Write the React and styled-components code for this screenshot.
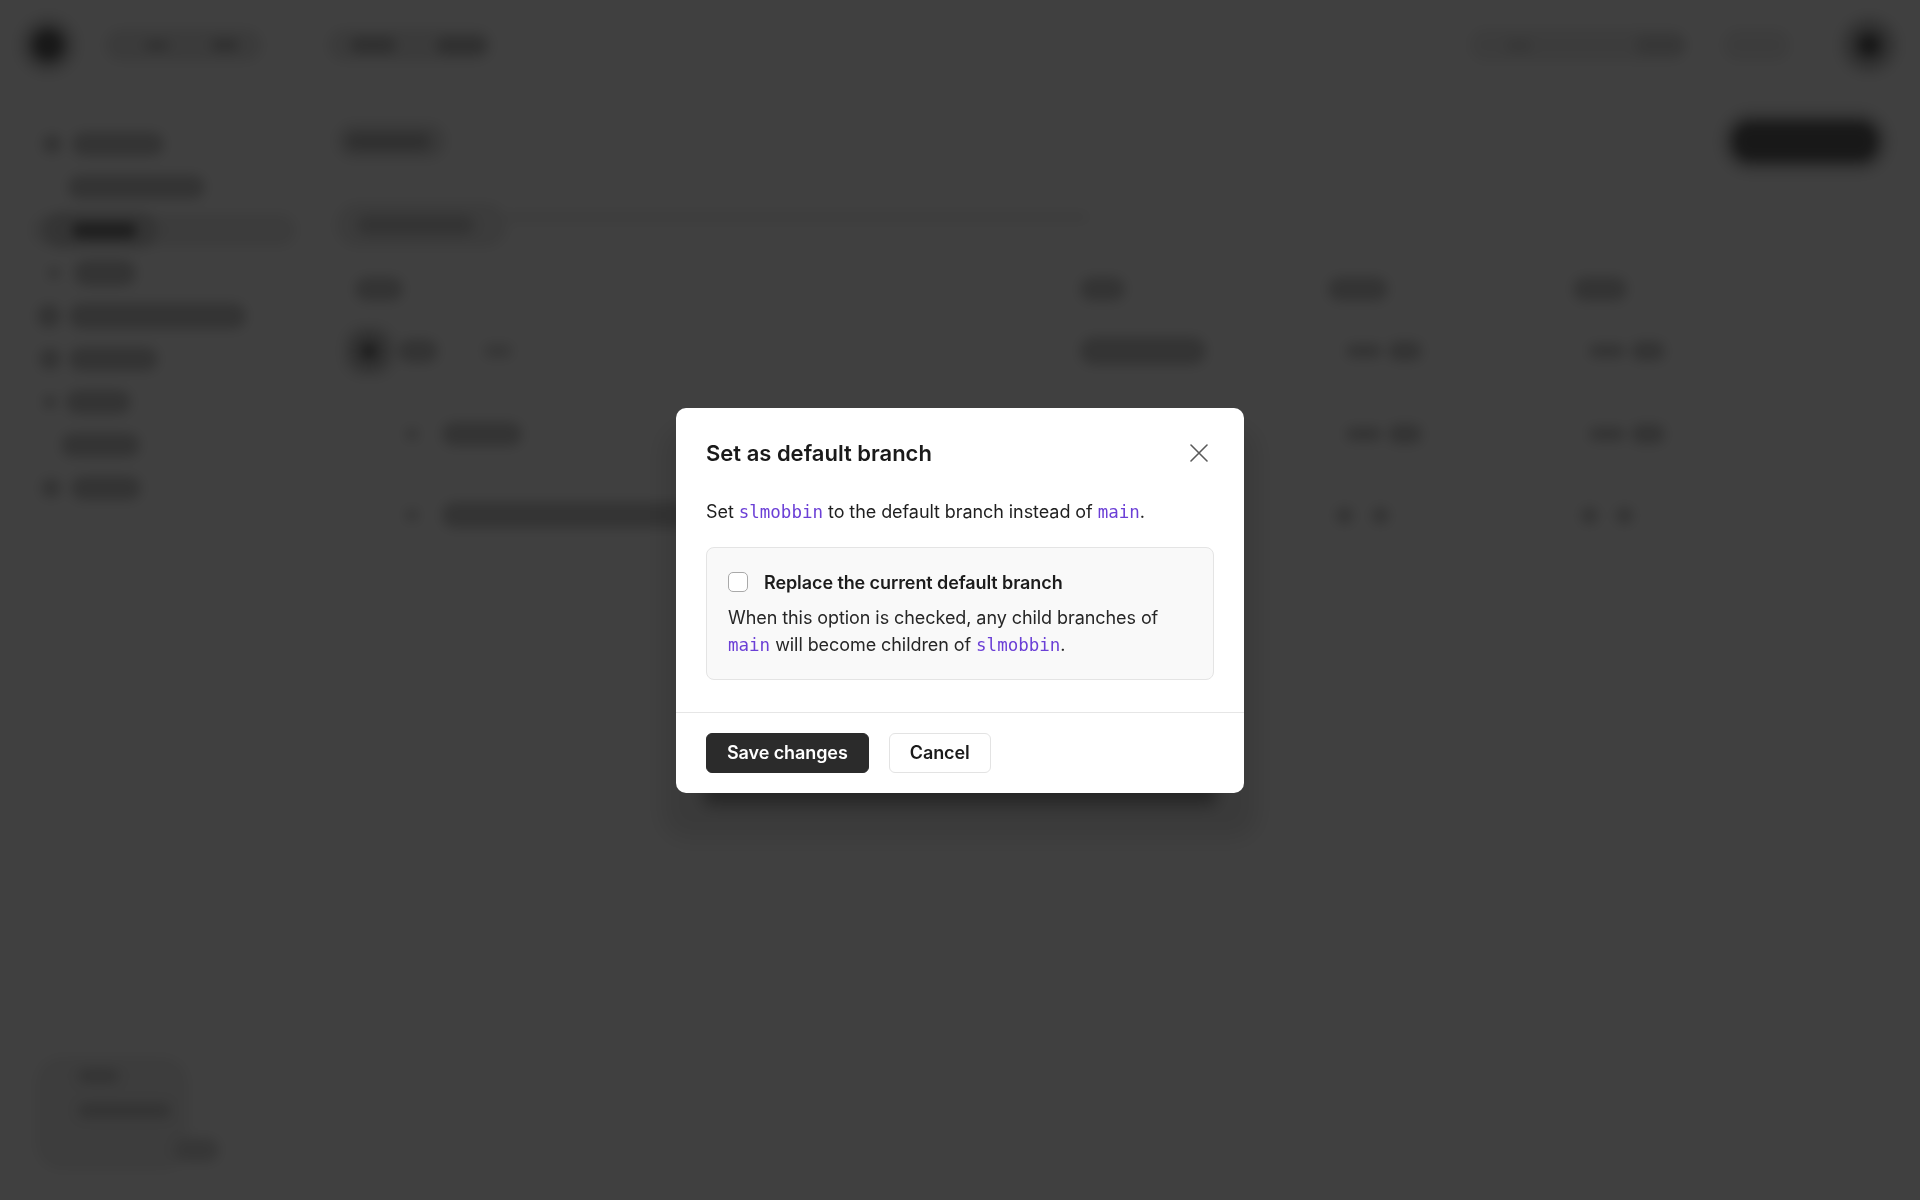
import React from "react";
import styled, { createGlobalStyle } from "styled-components";

const GlobalStyle = createGlobalStyle`
  html, body {
    margin: 0;
    padding: 0;
    background: #ffffff;
  }
  body {
    font-family: Inter, "Noto Sans", "Liberation Sans", sans-serif;
    -webkit-font-smoothing: antialiased;
  }
  * {
    box-sizing: border-box;
  }
`;

/* ---------- the page behind the dialog (blurred) ---------- */

const Page = styled.div`
  min-height: 100vh;
  display: flex;
  flex-direction: column;
  background: #ffffff;
  filter: blur(6px);
`;

const TopBar = styled.header`
  height: 90px;
  display: flex;
  align-items: center;
  justify-content: space-between;
  padding: 0 39px 0 33px;
`;

const NavGroup = styled.div`
  display: flex;
  align-items: center;
  gap: ${(p) => p.$gap || 20}px;
`;

const Avatar = styled.span`
  display: block;
  flex: none;
  width: ${(p) => p.$size || 28}px;
  height: ${(p) => p.$size || 28}px;
  margin-left: ${(p) => p.$ml || 0}px;
  border-radius: 50%;
  background: #626262;
  box-shadow: 0 0 0 ${(p) => p.$ring || 8}px #c0c0c0, 0 0 0 ${(p) => (p.$ring || 8) + 7}px #ebebeb;
`;

const Chip = styled.div`
  display: flex;
  flex: none;
  align-items: center;
  gap: ${(p) => p.$gap || 10}px;
  width: ${(p) => (p.$w ? `${p.$w}px` : "auto")};
  height: ${(p) => p.$h || 32}px;
  margin-left: ${(p) => p.$ml || 0}px;
  padding: 0 ${(p) => p.$pad ?? 12}px;
  justify-content: ${(p) => p.$justify || "flex-start"};
  border-radius: 999px;
  background: ${(p) => p.$bg || "#eaeaea"};
`;

const tones = {
  faint: "#dadada",
  light: "#cdcdcd",
  mid: "#bdbdbd",
  dark: "#767676",
};

const Ghost = styled.span`
  display: block;
  flex: none;
  width: ${(p) => p.$w}px;
  height: ${(p) => p.$h || 14}px;
  margin-left: ${(p) => p.$ml || 0}px;
  border-radius: 999px;
  background: ${(p) => tones[p.$tone || "light"]};
`;

const Dot = styled.span`
  display: block;
  flex: none;
  width: ${(p) => p.$size || 10}px;
  height: ${(p) => p.$size || 10}px;
  border-radius: 50%;
  background: ${(p) => tones[p.$tone || "light"]};
`;

const Layout = styled.div`
  flex: 1;
  display: grid;
  grid-template-columns: 300px 1fr;
`;

const Sidebar = styled.aside`
  display: flex;
  flex-direction: column;
  gap: 11px;
  padding: 38px 0 30px 36px;
`;

const SideItem = styled.div`
  height: 32px;
  display: flex;
  align-items: center;
  gap: ${(p) => p.$gap || 10}px;
  margin-left: ${(p) => (p.$active ? -4 : 0)}px;
  padding-left: ${(p) => p.$indent || 0}px;
  border-radius: 999px;
  background: ${(p) => (p.$active ? "#ededed" : "transparent")};
  width: ${(p) => (p.$active ? "264px" : "auto")};
`;

const SideFooter = styled.div`
  margin-top: auto;
  width: 152px;
  display: flex;
  flex-direction: column;
  gap: 20px;
  padding: 12px 0 8px 42px;
  border-radius: 26px;
  background: #f1f1f1;
`;

const Main = styled.main`
  display: flex;
  flex-direction: column;
  padding: 31px 40px 0 36px;
`;

const MainHeader = styled.div`
  display: flex;
  align-items: center;
  justify-content: space-between;
  height: 40px;
`;

const DarkButton = styled.span`
  display: block;
  width: 144px;
  height: 39px;
  margin-right: 3px;
  border-radius: 18px;
  background: #626262;
  box-shadow: 0 0 0 8px #c2c2c2, 0 0 0 14px #eaeaea;
`;

const Tabs = styled.div`
  display: flex;
  align-items: flex-start;
  height: 44px;
  margin-top: 42px;
`;

const TabLine = styled.span`
  display: block;
  width: 580px;
  height: 6px;
  margin-top: 11px;
  border-radius: 3px;
  background: #e8e8e8;
`;

const Table = styled.div`
  margin-top: 14px;
  display: flex;
  flex-direction: column;
`;

const Row = styled.div`
  display: grid;
  grid-template-columns: 744px 248px 245px 1fr;
  align-items: center;
  height: ${(p) => p.$h || 80}px;
`;

const Cell = styled.div`
  display: flex;
  align-items: center;
  gap: ${(p) => p.$gap || 10}px;
  padding-left: ${(p) => p.$indent || 0}px;
`;

/* ---------- dialog ---------- */

const Overlay = styled.div`
  position: fixed;
  inset: 0;
  display: flex;
  align-items: center;
  justify-content: center;
  background: rgba(0, 0, 0, 0.75);
`;

const Dialog = styled.div`
  width: 568px;
  background: #ffffff;
  border-radius: 10px;
  box-shadow: 0 40px 16px -28px rgba(0, 0, 0, 0.36), 0 32px 24px 14px rgba(0, 0, 0, 0.1);
  color: #1d1d1d;
`;

const DialogHeader = styled.div`
  display: flex;
  align-items: center;
  justify-content: space-between;
  padding: 30px 36px 0 30px;
`;

const Title = styled.h2`
  margin: 0;
  font-size: 22px;
  line-height: 30px;
  font-weight: 600;
  color: #1a1a1a;
`;

const CloseButton = styled.button`
  display: flex;
  align-items: center;
  justify-content: center;
  width: 18px;
  height: 18px;
  padding: 0;
  border: 0;
  background: none;
  cursor: pointer;
`;

const DialogBody = styled.div`
  display: flex;
  flex-direction: column;
  gap: 21px;
  padding: 30px 30px 32px;
`;

const Text = styled.p`
  margin: 0;
  font-size: 18px;
  line-height: 27px;
  letter-spacing: -0.004em;
  color: ${(p) => (p.$muted ? "#262626" : "#1f1f1f")};
`;

const Code = styled.code`
  font-family: "DejaVu Sans Mono", "Liberation Mono", monospace;
  font-size: 17.5px;
  letter-spacing: 0;
  color: #6b3fd6;
`;

const OptionBox = styled.div`
  display: flex;
  flex-direction: column;
  gap: 8px;
  padding: 21px 21px 20px;
  border: 1px solid #e4e4e4;
  border-radius: 8px;
  background: #f9f9f9;
`;

const OptionLabel = styled.label`
  display: flex;
  align-items: center;
  gap: 16px;
  font-size: 18px;
  line-height: 27px;
  font-weight: 600;
  letter-spacing: -0.005em;
  color: #1c1c1c;
  cursor: pointer;
`;

const Checkbox = styled.input.attrs({ type: "checkbox" })`
  appearance: none;
  margin: 0;
  width: 20px;
  height: 20px;
  border: 1.5px solid #a9a9a9;
  border-radius: 5px;
  background: #ffffff;
`;

const DialogFooter = styled.div`
  display: flex;
  align-items: center;
  gap: 20px;
  padding: 20px 30px;
  border-top: 1px solid #e6e6e6;
`;

const Button = styled.button`
  height: 40px;
  padding: 0 20px;
  border-radius: 6px;
  font-family: inherit;
  font-size: 18px;
  font-weight: 600;
  letter-spacing: -0.005em;
  cursor: pointer;
  border: 1px solid ${(p) => (p.$primary ? "#2b2b2b" : "#e3e3e3")};
  background: ${(p) => (p.$primary ? "#2b2b2b" : "#ffffff")};
  color: ${(p) => (p.$primary ? "#ffffff" : "#1a1a1a")};
`;

function CloseIcon() {
  return (
    <svg width="18" height="18" viewBox="0 0 18 18" fill="none">
      <path d="M1 1L17 17M17 1L1 17" stroke="#5a5a5a" strokeWidth="1.6" strokeLinecap="round" />
    </svg>
  );
}

function MetaPair() {
  return (
    <>
      <Ghost $w={36} $h={14} />
      <Ghost $w={34} $h={20} $ml={-4} />
    </>
  );
}

function Backdrop() {
  return (
    <Page aria-hidden="true">
      <TopBar>
        <NavGroup $gap={0}>
          <Avatar $size={30} $ring={9} />
          <Chip $w={157} $ml={22} $pad={0}>
            <Ghost $w={24} $h={9} $tone="mid" $ml={40} />
            <Ghost $w={28} $h={12} $tone="mid" $ml={32} />
          </Chip>
          <Chip $w={164} $ml={46} $pad={0} $gap={0}>
            <Ghost $w={46} $h={16} $tone="mid" $ml={22} />
            <Ghost $w={50} $h={17} $tone="mid" $ml={30} />
          </Chip>
        </NavGroup>
        <NavGroup $gap={0}>
          <Chip $w={217} $bg="#f0f0f0" $pad={0} $gap={0}>
            <Ghost $w={26} $h={11} $tone="faint" $ml={36} />
            <Ghost $w={50} $h={20} $tone="faint" $ml={93} />
          </Chip>
          <Chip $w={67} $ml={16} $bg="#f0f0f0" />
          <Avatar $size={24} $ring={12} $ml={47} />
        </NavGroup>
      </TopBar>

      <Layout>
        <Sidebar>
          <SideItem $indent={6}>
            <Dot $size={20} />
            <Ghost $w={92} $h={24} />
          </SideItem>
          <SideItem $indent={32}>
            <Ghost $w={137} $h={24} />
          </SideItem>
          <SideItem $active $indent={11}>
            <Chip $w={115} $h={36} $bg="#d0d0d0" $pad={29}>
              <Ghost $w={65} $h={15} $tone="dark" />
            </Chip>
          </SideItem>
          <SideItem $indent={12} $gap={14}>
            <Dot $size={12} />
            <Ghost $w={62} $h={26} />
          </SideItem>
          <SideItem $indent={1} $gap={8}>
            <Dot $size={24} />
            <Ghost $w={177} $h={26} />
          </SideItem>
          <SideItem $indent={3} $gap={8}>
            <Dot $size={22} />
            <Ghost $w={89} $h={24} />
          </SideItem>
          <SideItem $indent={7} $gap={9}>
            <Dot $size={14} />
            <Ghost $w={65} $h={24} />
          </SideItem>
          <SideItem $indent={25}>
            <Ghost $w={79} $h={24} />
          </SideItem>
          <SideItem $indent={5} $gap={10}>
            <Dot $size={20} />
            <Ghost $w={70} $h={24} />
          </SideItem>
          <SideFooter>
            <Ghost $w={41} $h={14} />
            <Ghost $w={93} $h={15} />
            <Ghost $w={45} $h={24} $ml={96} $tone="faint" />
          </SideFooter>
        </Sidebar>

        <Main>
          <MainHeader>
            <Chip $w={110} $h={36} $bg="#e6e6e6" $pad={10}>
              <Ghost $w={85} $h={17} $tone="mid" />
            </Chip>
            <DarkButton />
          </MainHeader>
          <Tabs>
            <Chip $w={171} $h={44} $bg="#ededed" $pad={21}>
              <Ghost $w={117} $h={20} />
            </Chip>
            <TabLine />
          </Tabs>
          <Table>
            <Row $h={56}>
              <Cell $indent={19}>
                <Ghost $w={48} $h={24} />
              </Cell>
              <Cell>
                <Ghost $w={45} $h={24} />
              </Cell>
              <Cell>
                <Ghost $w={60} $h={24} />
              </Cell>
              <Cell>
                <Ghost $w={54} $h={24} />
              </Cell>
            </Row>
            <Row $h={68}>
              <Cell $indent={26} $gap={0}>
                <Avatar $size={14} $ring={13} />
                <Ghost $w={40} $h={24} $ml={12} />
                <Ghost $w={28} $h={14} $tone="faint" $ml={36} />
              </Cell>
              <Cell>
                <Ghost $w={126} $h={28} />
              </Cell>
              <Cell $indent={18} $gap={0}>
                <MetaPair />
              </Cell>
              <Cell $indent={16} $gap={0}>
                <MetaPair />
              </Cell>
            </Row>
            <Row $h={98}>
              <Cell $indent={70} $gap={24}>
                <Dot $size={12} />
                <Ghost $w={80} $h={24} />
              </Cell>
              <Cell />
              <Cell $indent={18} $gap={0}>
                <MetaPair />
              </Cell>
              <Cell $indent={16} $gap={0}>
                <MetaPair />
              </Cell>
            </Row>
            <Row $h={64}>
              <Cell $indent={70} $gap={24}>
                <Dot $size={12} />
                <Ghost $w={246} $h={26} />
              </Cell>
              <Cell />
              <Cell $indent={8} $gap={19}>
                <Dot $size={17} />
                <Dot $size={17} />
              </Cell>
              <Cell $indent={8} $gap={18}>
                <Dot $size={17} />
                <Dot $size={17} />
              </Cell>
            </Row>
          </Table>
        </Main>
      </Layout>
    </Page>
  );
}

export default function App() {
  return (
    <>
      <GlobalStyle />
      <Backdrop />
      <Overlay>
        <Dialog role="dialog" aria-labelledby="default-branch-title">
          <DialogHeader>
            <Title id="default-branch-title">Set as default branch</Title>
            <CloseButton aria-label="Close">
              <CloseIcon />
            </CloseButton>
          </DialogHeader>
          <DialogBody>
            <Text>
              Set <Code>slmobbin</Code> to the default branch instead of <Code>main</Code>.
            </Text>
            <OptionBox>
              <OptionLabel>
                <Checkbox />
                Replace the current default branch
              </OptionLabel>
              <Text $muted>
                When this option is checked, any child branches of
                <br />
                <Code>main</Code> will become children of <Code>slmobbin</Code>.
              </Text>
            </OptionBox>
          </DialogBody>
          <DialogFooter>
            <Button $primary>Save changes</Button>
            <Button>Cancel</Button>
          </DialogFooter>
        </Dialog>
      </Overlay>
    </>
  );
}
